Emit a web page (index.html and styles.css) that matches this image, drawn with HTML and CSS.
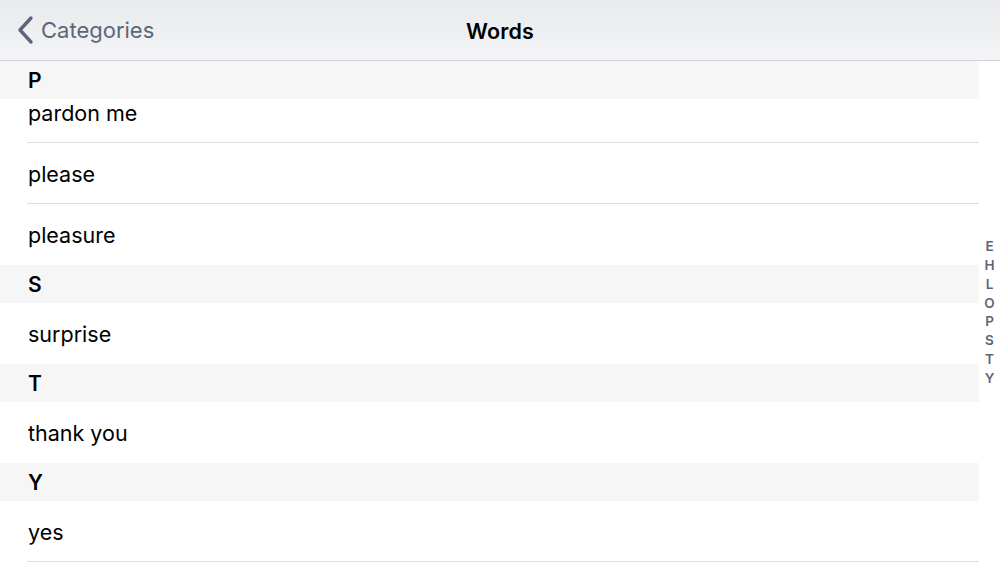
FILE: index.html
```html
<!DOCTYPE html>
<html lang="en">

<head>
  <meta charset="UTF-8">
  <meta name="viewport" content="width=device-width, initial-scale=1.0">
  <title>Words</title>
  <link rel="stylesheet" href="styles.css">
</head>

<body>
  <div class="navbar">
    <div class="back">
      <svg class="chevron" width="20" height="30" viewBox="0 0 20 30">
        <path d="M15 3 L4 15 L15 27" fill="none" stroke="#5d6678" stroke-width="3.4" stroke-linecap="round" stroke-linejoin="round"/>
      </svg>
      <span>Categories</span>
    </div>
    <div class="title">Words</div>
    <div class="spacer"></div>
  </div>

  <div class="content">
    <div class="list">
      <div class="section-header">P</div>
      <div class="row first">pardon me</div>
      <div class="row">please</div>
      <div class="row last">pleasure</div>

      <div class="section-header">S</div>
      <div class="row last">surprise</div>

      <div class="section-header">T</div>
      <div class="row last">thank you</div>

      <div class="section-header">Y</div>
      <div class="row">yes</div>
    </div>

    <div class="index">
      <span>E</span>
      <span>H</span>
      <span>L</span>
      <span>O</span>
      <span>P</span>
      <span>S</span>
      <span>T</span>
      <span>Y</span>
    </div>
  </div>
</body>

</html>
```

FILE: styles.css
```css
body {
  margin: 0;
  font-family: Inter, 'Noto Sans', sans-serif;
  background-color: #ffffff;
  color: #000;
  width: 1000px;
  height: 563px;
  overflow: hidden;
}

.navbar {
  height: 60px;
  display: grid;
  grid-template-columns: 1fr auto 1fr;
  align-items: center;
  padding: 0 16px;
  background: linear-gradient(#e9eaed, #f3f4f6);
  border-bottom: 1px solid #d3d3d6;
}

.back {
  display: flex;
  align-items: center;
  color: #5d6678;
  font-size: 22px;
  gap: 5px;
}

.back span {
  margin-top: -1px;
}

.title {
  font-size: 21.5px;
  font-weight: 600;
  letter-spacing: 0.2px;
  margin-top: 1px;
}

.content {
  display: flex;
}

.list {
  width: 979px;
}

.section-header {
  position: relative;
  z-index: 1;
  height: 38px;
  background-color: #f6f6f6;
  padding-left: 28px;
  font-size: 21px;
  font-weight: 600;
  line-height: 40px;
}

.row {
  height: 60px;
  margin-left: 27px;
  padding-left: 1px;
  border-bottom: 1px solid #dedee0;
  font-size: 21.5px;
  line-height: 63px;
}

.row.first {
  margin-top: -17px;
}

.row.last {
  border-bottom: none;
  height: 61px;
}

.index {
  flex: 1;
  display: flex;
  flex-direction: column;
  align-items: center;
  padding-top: 176px;
  color: #5d6678;
  font-size: 13.5px;
  font-weight: 600;
  line-height: 18.85px;
}
```
